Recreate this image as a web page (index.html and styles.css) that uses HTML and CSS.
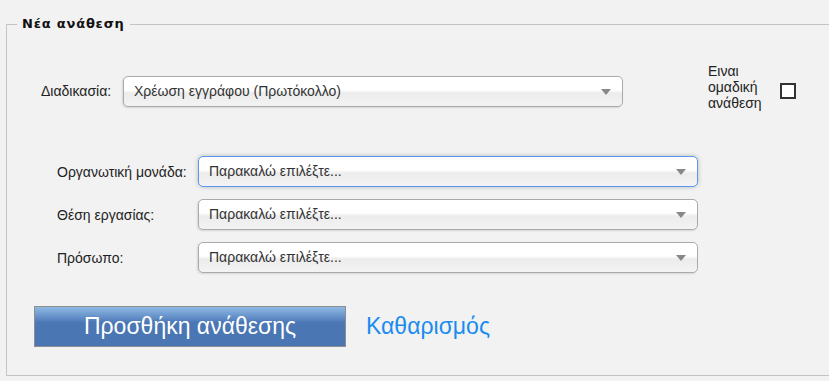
FILE: index.html
```html
<!DOCTYPE html>
<html lang="el">
<head>
    <meta charset="UTF-8">
    <title>Νέα ανάθεση</title>
    <link rel="stylesheet" href="styles.css">
</head>
<body>
    <fieldset class="assign-box">
        <legend>Νέα ανάθεση</legend>

        <div class="proc-row">
            <label class="proc-label">Διαδικασία:</label>
            <div class="select proc-select">
                <span>Χρέωση εγγράφου (Πρωτόκολλο)</span>
                <i class="arrow"></i>
            </div>
            <div class="group-text">Ειναι ομαδική ανάθεση</div>
            <span class="checkbox"></span>
        </div>

        <div class="fields">
            <label>Οργανωτική μονάδα:</label>
            <div class="select focused">
                <span>Παρακαλώ επιλέξτε...</span>
                <i class="arrow"></i>
            </div>

            <label>Θέση εργασίας:</label>
            <div class="select">
                <span>Παρακαλώ επιλέξτε...</span>
                <i class="arrow"></i>
            </div>

            <label>Πρόσωπο:</label>
            <div class="select">
                <span>Παρακαλώ επιλέξτε...</span>
                <i class="arrow"></i>
            </div>
        </div>

        <div class="actions">
            <button class="btn-add">Προσθήκη ανάθεσης</button>
            <a class="clear-link" href="#">Καθαρισμός</a>
        </div>
    </fieldset>
</body>
</html>
```

FILE: styles.css
```css
* {
    box-sizing: border-box;
}

html {
    overflow: hidden;
}

body {
    margin: 0;
    background-color: #f2f2f2;
    font-family: 'Liberation Sans', Arial, sans-serif;
    font-size: 14px;
    color: #222;
}

.assign-box {
    margin: 16px -40px 0 6px;
    padding: 0 0 28px 0;
    border: 1px solid #c4c4c4;
}

.assign-box legend {
    margin-left: 10px;
    padding: 0 5px;
    font-family: 'DejaVu Sans', Verdana, sans-serif;
    font-weight: bold;
    font-size: 13px;
    line-height: 16px;
    letter-spacing: 0.8px;
    color: #111;
}

/* Διαδικασία */
.proc-row {
    display: flex;
    align-items: flex-start;
    margin-top: 31px;
    padding-left: 34px;
}

.proc-label {
    width: 82px;
    margin-top: 13px;
    line-height: 31px;
}

.proc-select {
    width: 500px;
    margin-top: 13px;
}

.group-text {
    width: 66px;
    margin-left: 85px;
    line-height: 16px;
}

.checkbox {
    width: 16px;
    height: 16px;
    margin-top: 20px;
    margin-left: 6px;
    border: 2px solid #333;
    background: #fff;
}

/* select boxes */
.select {
    position: relative;
    height: 31px;
    padding-left: 10px;
    border: 1px solid #aaa;
    border-radius: 5px;
    background: linear-gradient(#fff 0%, #fff 45%, #ececec 55%, #f3f3f3 100%);
    box-shadow: -1px 1px 2px rgba(0, 0, 0, 0.12);
    line-height: 29px;
    color: #333;
}

.select.focused {
    border-color: #5b97ec;
    box-shadow: 0 0 4px rgba(0, 0, 0, 0.25);
}

.arrow {
    position: absolute;
    right: 11px;
    top: 12px;
    width: 0;
    height: 0;
    border-left: 5px solid transparent;
    border-right: 5px solid transparent;
    border-top: 6px solid #888;
}

.fields {
    display: grid;
    grid-template-columns: 141px 500px;
    row-gap: 12px;
    align-items: center;
    margin-top: 45px;
    padding-left: 50px;
}

/* κουμπιά */
.actions {
    display: flex;
    align-items: center;
    margin-top: 33px;
    padding-left: 27px;
}

.btn-add {
    width: 312px;
    height: 41px;
    padding: 0;
    border: 1px solid #8e8e8e;
    background: linear-gradient(#8fb9e3 0%, #5d89c4 30%, #4a76b4 40%, #4a76b4 100%);
    color: #fff;
    font-family: 'Liberation Sans', Arial, sans-serif;
    font-size: 23px;
    cursor: pointer;
}

.clear-link {
    margin-left: 20px;
    color: #1a8cf0;
    font-size: 23px;
    text-decoration: none;
}
```
